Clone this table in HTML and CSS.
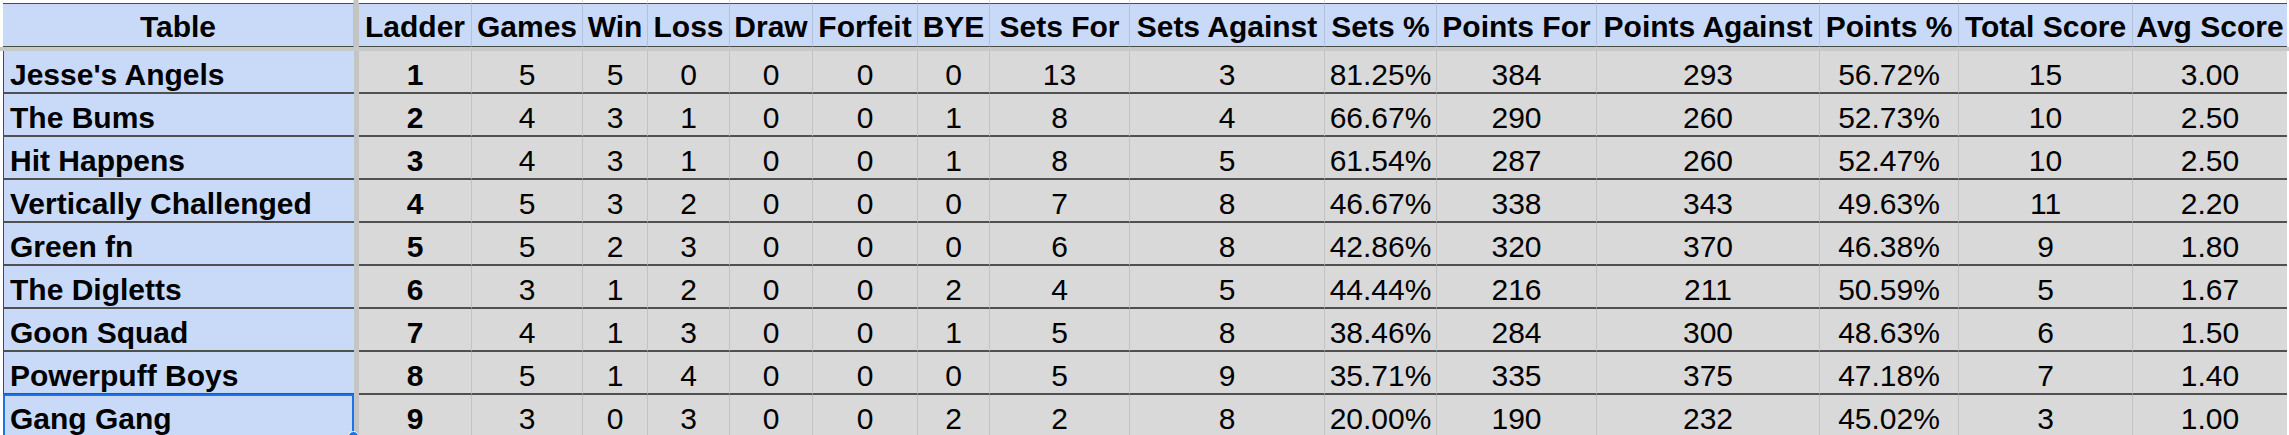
FILE: index.html
```html
<!DOCTYPE html>
<html>
<head>
<meta charset="utf-8">
<title>Ladder</title>
<link rel="stylesheet" href="styles.css">
</head>
<body>
<div class="sheet">
  <div class="row top">
    <div></div><div></div><div class="div"></div><div></div><div></div><div></div><div></div><div></div><div></div><div></div><div></div><div></div><div></div><div></div><div></div><div></div><div></div><div></div>
  </div>
  <div class="row head">
    <div class="lead"></div>
    <div class="h">Table</div>
    <div class="div"></div>
    <div class="h">Ladder</div>
    <div class="h">Games</div>
    <div class="h">Win</div>
    <div class="h">Loss</div>
    <div class="h">Draw</div>
    <div class="h">Forfeit</div>
    <div class="h">BYE</div>
    <div class="h">Sets For</div>
    <div class="h">Sets Against</div>
    <div class="h">Sets %</div>
    <div class="h">Points For</div>
    <div class="h">Points Against</div>
    <div class="h">Points %</div>
    <div class="h">Total Score</div>
    <div class="h">Avg Score</div>
  </div>
  <div class="row gap"><div></div><div></div><div></div><div></div><div></div><div></div><div></div><div></div><div></div><div></div><div></div><div></div><div></div><div></div><div></div><div></div><div></div><div></div></div>

  <div class="row data">
    <div class="lead"></div><div class="name">Jesse's Angels</div><div class="div"></div>
    <div class="c b">1</div><div class="c">5</div><div class="c">5</div><div class="c">0</div><div class="c">0</div><div class="c">0</div><div class="c">0</div><div class="c">13</div><div class="c">3</div><div class="c">81.25%</div><div class="c">384</div><div class="c">293</div><div class="c">56.72%</div><div class="c">15</div><div class="c">3.00</div>
  </div>
  <div class="row data">
    <div class="lead"></div><div class="name">The Bums</div><div class="div"></div>
    <div class="c b">2</div><div class="c">4</div><div class="c">3</div><div class="c">1</div><div class="c">0</div><div class="c">0</div><div class="c">1</div><div class="c">8</div><div class="c">4</div><div class="c">66.67%</div><div class="c">290</div><div class="c">260</div><div class="c">52.73%</div><div class="c">10</div><div class="c">2.50</div>
  </div>
  <div class="row data">
    <div class="lead"></div><div class="name">Hit Happens</div><div class="div"></div>
    <div class="c b">3</div><div class="c">4</div><div class="c">3</div><div class="c">1</div><div class="c">0</div><div class="c">0</div><div class="c">1</div><div class="c">8</div><div class="c">5</div><div class="c">61.54%</div><div class="c">287</div><div class="c">260</div><div class="c">52.47%</div><div class="c">10</div><div class="c">2.50</div>
  </div>
  <div class="row data">
    <div class="lead"></div><div class="name">Vertically Challenged</div><div class="div"></div>
    <div class="c b">4</div><div class="c">5</div><div class="c">3</div><div class="c">2</div><div class="c">0</div><div class="c">0</div><div class="c">0</div><div class="c">7</div><div class="c">8</div><div class="c">46.67%</div><div class="c">338</div><div class="c">343</div><div class="c">49.63%</div><div class="c">11</div><div class="c">2.20</div>
  </div>
  <div class="row data">
    <div class="lead"></div><div class="name">Green fn</div><div class="div"></div>
    <div class="c b">5</div><div class="c">5</div><div class="c">2</div><div class="c">3</div><div class="c">0</div><div class="c">0</div><div class="c">0</div><div class="c">6</div><div class="c">8</div><div class="c">42.86%</div><div class="c">320</div><div class="c">370</div><div class="c">46.38%</div><div class="c">9</div><div class="c">1.80</div>
  </div>
  <div class="row data">
    <div class="lead"></div><div class="name">The Digletts</div><div class="div"></div>
    <div class="c b">6</div><div class="c">3</div><div class="c">1</div><div class="c">2</div><div class="c">0</div><div class="c">0</div><div class="c">2</div><div class="c">4</div><div class="c">5</div><div class="c">44.44%</div><div class="c">216</div><div class="c">211</div><div class="c">50.59%</div><div class="c">5</div><div class="c">1.67</div>
  </div>
  <div class="row data">
    <div class="lead"></div><div class="name">Goon Squad</div><div class="div"></div>
    <div class="c b">7</div><div class="c">4</div><div class="c">1</div><div class="c">3</div><div class="c">0</div><div class="c">0</div><div class="c">1</div><div class="c">5</div><div class="c">8</div><div class="c">38.46%</div><div class="c">284</div><div class="c">300</div><div class="c">48.63%</div><div class="c">6</div><div class="c">1.50</div>
  </div>
  <div class="row data">
    <div class="lead"></div><div class="name">Powerpuff Boys</div><div class="div"></div>
    <div class="c b">8</div><div class="c">5</div><div class="c">1</div><div class="c">4</div><div class="c">0</div><div class="c">0</div><div class="c">0</div><div class="c">5</div><div class="c">9</div><div class="c">35.71%</div><div class="c">335</div><div class="c">375</div><div class="c">47.18%</div><div class="c">7</div><div class="c">1.40</div>
  </div>
  <div class="row data">
    <div class="lead"></div><div class="name selected">Gang Gang<span class="handle"></span></div><div class="div"></div>
    <div class="c b">9</div><div class="c">3</div><div class="c">0</div><div class="c">3</div><div class="c">0</div><div class="c">0</div><div class="c">2</div><div class="c">2</div><div class="c">8</div><div class="c">20.00%</div><div class="c">190</div><div class="c">232</div><div class="c">45.02%</div><div class="c">3</div><div class="c">1.00</div>
  </div>
</div>
</body>
</html>
```

FILE: styles.css
```css
html, body {
  margin: 0;
  padding: 0;
  background: #ffffff;
  overflow: hidden;
}

body {
  font-family: "Liberation Sans", Arial, sans-serif;
  color: #000;
}

.sheet {
  --cols: 3px 351px 5px 113px 111px 65px 82px 83px 105px 72px 140px 195px 112px 160px 223px 139px 174px 154px;
  width: 2289px;
  height: 435px;
  overflow: hidden;
}

.row {
  display: grid;
  grid-template-columns: var(--cols);
}

.row > div {
  box-sizing: border-box;
}

/* strip of the row above, cut off */
.top {
  height: 3px;
}
.top > div {
  border-right: 1px solid #e2e2e2;
}
.top > div:first-child {
  border-right: none;
}

/* header */
.head {
  height: 44px;
}
.head .lead {
  background: #fff;
}
.h {
  background: #c9daf8;
  border-top: 1px solid #4a4a4a;
  border-bottom: 1px solid #4a4a4a;
  border-right: 1px solid #b4c1d6;
  font-weight: bold;
  font-size: 30px;
  line-height: 34px;
  white-space: nowrap;
  display: flex;
  align-items: flex-end;
  justify-content: center;
  padding-bottom: 2px;
}
.head .h:first-of-type {
  border-left: 1px solid #4a4a4a;
}
.head .h:last-child {
  border-right: none;
}

/* frozen divider */
.div {
  background: #c4c4c4;
}

.gap {
  height: 4px;
  background: #c8c8c8;
}

/* data rows */
.data {
  height: 43px;
}
.data .lead {
  background: #fff;
}
.data > div:not(.lead):not(.div) {
  font-size: 30px;
  line-height: 34px;
  white-space: nowrap;
  display: flex;
  align-items: flex-end;
  border-bottom: 2px solid #505050;
}
.name {
  background: #c9daf8;
  font-weight: bold;
  border-left: 1px solid #4a4a4a;
  padding-left: 6px;
  justify-content: flex-start;
}
.c {
  background: #d9d9d9;
  border-right: 1px solid #c2c2c2;
  justify-content: center;
}
.c:last-child {
  border-right: none;
}
.b {
  font-weight: bold;
}

/* selected cell */
.selected {
  position: relative;
}
.selected::after {
  content: "";
  position: absolute;
  left: -1px;
  top: -1px;
  right: 0;
  bottom: -2px;
  border: 2px solid #1a73e8;
  pointer-events: none;
}
.handle {
  position: absolute;
  right: -5px;
  bottom: -6px;
  width: 9px;
  height: 9px;
  border-radius: 50%;
  background: #1a73e8;
  border: 1px solid #fff;
  z-index: 2;
}
```
